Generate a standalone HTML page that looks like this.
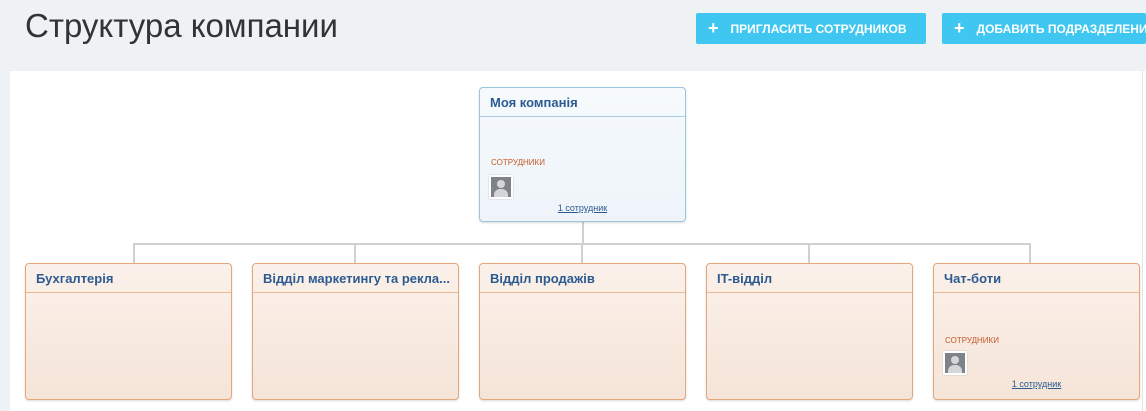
<!DOCTYPE html>
<html><head><meta charset="utf-8"><style>
body{margin:0;width:1146px;height:407px;overflow:hidden;background:#eef2f5;font-family:"Liberation Sans",sans-serif;position:relative}
h1{position:absolute;left:25px;top:7px;margin:0;font-weight:normal;font-size:33px;color:#333;font-family:"Liberation Sans",sans-serif}
.btn{position:absolute;top:13px;height:31px;background:#3fc7f1;border-radius:2px;color:#fff;font-weight:bold;font-size:12px;line-height:31px;white-space:nowrap;overflow:hidden}
.btn b{font-size:18px;margin:0 12px 0 12px;vertical-align:-1px}
.main{position:absolute;left:10px;top:71px;width:1132px;height:340px;background:#fff}
.sb{position:absolute;left:1142px;top:71px;width:4px;height:340px;background:#fff;border-left:1px solid #e5e5e5}
.box{position:absolute;border-radius:4px;box-sizing:border-box}
.top{left:479px;top:87px;width:207px;height:135px;border:1px solid #99c5dd;background:linear-gradient(#f6fafd,#eef4f9);box-shadow:0 1px 2px rgba(0,0,0,.15)}
.dep{top:263px;width:207px;height:137px;border:1px solid #e3a77a;background:linear-gradient(#fbf1ea,#f5e4d8);box-shadow:0 1px 2px rgba(0,0,0,.15)}
.t{position:absolute;left:10px;top:7px;font-size:13px;font-weight:bold;color:#2c5b92;white-space:nowrap}
.hl{position:absolute;left:0;right:0;top:28px;height:1px}
.top .hl{background:#aacde0}
.dep .hl{background:#e8b896}
.s{position:absolute;left:11px;font-size:8px;color:#c35a2a}
.av{position:absolute;left:9px;width:20px;height:20px;background:#7e8389;border:2px solid #fff;box-shadow:0 0 1px #aaa;overflow:hidden}
.av:before{content:"";position:absolute;left:6px;top:3px;width:8px;height:8px;border-radius:50%;background:#d4d6d9}
.av:after{content:"";position:absolute;left:3px;top:12px;width:14px;height:10px;border-radius:6px 6px 0 0;background:#d4d6d9}
.lk{position:absolute;left:0;right:0;text-align:center;font-size:9px;color:#2c5b92;text-decoration:underline}
.l{position:absolute;background:#d0d0d0}
</style></head><body>
<h1>Структура компании</h1>
<div class="btn" style="left:696px;width:230px"><b>+</b>ПРИГЛАСИТЬ СОТРУДНИКОВ</div>
<div class="btn" style="left:942px;width:204px"><b>+</b>ДОБАВИТЬ ПОДРАЗДЕЛЕНИЕ</div>
<div class="main"></div><div class="sb"></div>
<div class="l" style="left:582px;top:221px;width:2px;height:23px"></div>
<div class="l" style="left:133px;top:243px;width:898px;height:2px"></div>
<div class="l" style="left:133px;top:243px;width:2px;height:20px"></div>
<div class="l" style="left:354px;top:243px;width:2px;height:20px"></div>
<div class="l" style="left:581px;top:243px;width:2px;height:20px"></div>
<div class="l" style="left:808px;top:243px;width:2px;height:20px"></div>
<div class="l" style="left:1029px;top:243px;width:2px;height:20px"></div>
<div class="box top"><div class="t">Моя компанія</div><div class="hl"></div>
<div class="s" style="top:70px">СОТРУДНИКИ</div><div class="av" style="top:87px"></div><div class="lk" style="top:115px">1 сотрудник</div></div>
<div class="box dep" style="left:25px"><div class="t">Бухгалтерія</div><div class="hl"></div></div>
<div class="box dep" style="left:252px"><div class="t">Відділ маркетингу та рекла...</div><div class="hl"></div></div>
<div class="box dep" style="left:479px"><div class="t">Відділ продажів</div><div class="hl"></div></div>
<div class="box dep" style="left:706px"><div class="t">IT-відділ</div><div class="hl"></div></div>
<div class="box dep" style="left:933px"><div class="t">Чат-боти</div><div class="hl"></div>
<div class="s" style="top:72px">СОТРУДНИКИ</div><div class="av" style="top:87px"></div><div class="lk" style="top:115px">1 сотрудник</div></div>
</body></html>
